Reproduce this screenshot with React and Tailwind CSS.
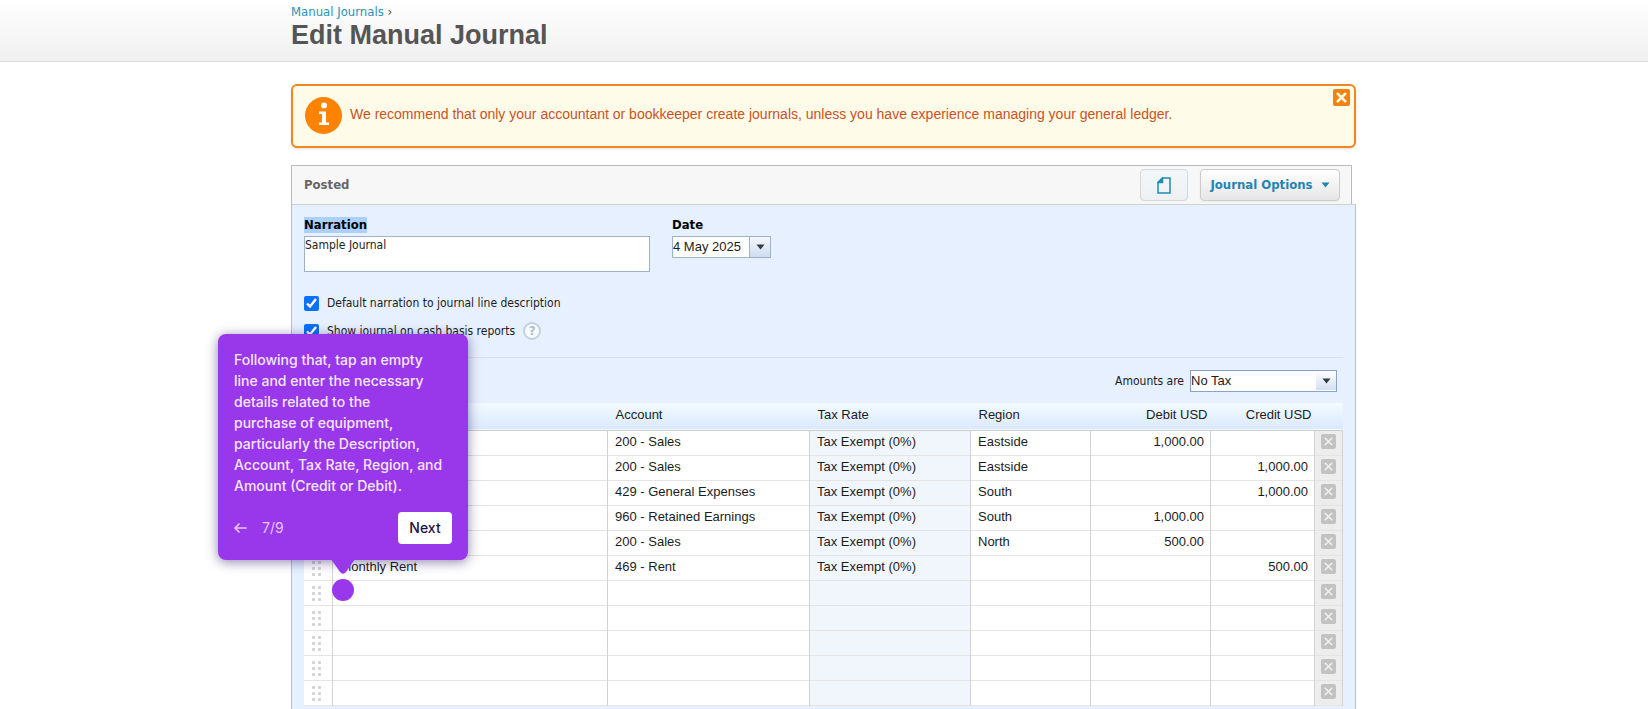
import React from 'react';
import { X } from 'lucide-react';

const lines = [
  { description: '', account: '200 - Sales', tax: 'Tax Exempt (0%)', region: 'Eastside', debit: '1,000.00', credit: '' },
  { description: '', account: '200 - Sales', tax: 'Tax Exempt (0%)', region: 'Eastside', debit: '', credit: '1,000.00' },
  { description: '', account: '429 - General Expenses', tax: 'Tax Exempt (0%)', region: 'South', debit: '', credit: '1,000.00' },
  { description: '', account: '960 - Retained Earnings', tax: 'Tax Exempt (0%)', region: 'South', debit: '1,000.00', credit: '' },
  { description: '', account: '200 - Sales', tax: 'Tax Exempt (0%)', region: 'North', debit: '500.00', credit: '' },
  { description: 'Monthly Rent', account: '469 - Rent', tax: 'Tax Exempt (0%)', region: '', debit: '', credit: '500.00' },
  {}, {}, {}, {}, {},
];

const Grip = () => (
  <svg width="12" height="19" viewBox="0 0 12 19" fill="#d2d2d2" className="mx-auto">
    {[4, 10, 16].map((y) => (
      <React.Fragment key={y}>
        <rect x="0" y={y} width="3" height="3" rx="1" />
        <rect x="6" y={y} width="3" height="3" rx="1" />
      </React.Fragment>
    ))}
  </svg>
);

const Caret = ({ color = '#333b45' }) => (
  <svg width="9" height="6" viewBox="0 0 9 6" fill={color}>
    <path d="M0.500 0.500h8L4.500 5.500z" />
  </svg>
);

const Breadcrumb = () => (
  <header className="h-[62px] border-b border-[#dcdcdc] bg-linear-to-b from-white to-[#f0f0f0]">
    <div className="mx-auto max-w-[1066px] pt-1">
      <nav className="text-[13px] leading-4 text-[#444]">
        <a href="#journals" className="text-[#2b93b8]">Manual Journals</a> ›
      </nav>
      <h1 className="font-['Liberation_Sans',sans-serif] text-[27px] leading-[30px] font-bold text-[#555]">Edit Manual Journal</h1>
    </div>
  </header>
);

const Notice = () => (
  <div className="mt-[22px] flex h-16 items-start rounded-md border-2 border-[#f5851f] bg-[#fffbe9] pt-[11px] pr-1 pl-3 shadow-sm">
    <svg width="37" height="37" viewBox="0 0 37 37" className="shrink-0">
      <circle cx="18.5" cy="18.5" r="18.5" fill="#ff8200" />
      <circle cx="19" cy="8.5" r="3" fill="#fff" />
      <path d="M14 14.500h7v11h3v2.500H14v-2.500h3v-8.500h-3z" fill="#fff" />
    </svg>
    <p className="ml-2 flex-1 pt-[7px] font-['Liberation_Sans',sans-serif] text-sm leading-5 text-[#c9531f]">
      We recommend that only your accountant or bookkeeper create journals, unless you have experience managing your general ledger.
    </p>
    <button type="button" aria-label="Dismiss" className="-mt-2 flex size-[17px] items-center justify-center rounded-xs bg-[#f5820f] text-[#fffbe9]">
      <X size={15} strokeWidth={4} />
    </button>
  </div>
);

const Toolbar = () => (
  <div className="mr-1 flex h-[39px] items-center border border-b-0 border-[#bbb] bg-[#f7f7f7] pr-[11px] pl-3 text-[13px]">
    <span className="font-bold text-[#666]">Posted</span>
    <button type="button" aria-label="Files" className="ml-auto flex h-8 w-12 items-center justify-center rounded-sm border border-[#d4d8db] bg-linear-to-b from-[#f4f7f9] to-[#eef1f4]">
      <svg width="14" height="17" viewBox="0 0 14 17" fill="none" stroke="#1e8cb5" strokeWidth="1.500">
        <path d="M5.500 1H13v15H1V5.500z" />
        <path d="M1 5.500L5.500 1v4.500z" fill="#1e8cb5" />
      </svg>
    </button>
    <button type="button" className="ml-3 flex h-8 w-[140px] items-center justify-center gap-2 rounded-sm border border-[#ccc] bg-linear-to-b from-white to-[#e6e6e6] font-bold text-[#1e86b4] shadow-xs">
      Journal Options
      <Caret color="#1e86b4" />
    </button>
  </div>
);

const JournalFields = () => (
  <div className="border-b border-[#d8e0ea] pb-[17px]">
    <div className="flex gap-[22px]">
      <div className="flex w-[346px] flex-col items-start">
        <label htmlFor="narration" className="bg-[#acd0fc] text-[13px] leading-4 font-bold text-black">Narration</label>
        <textarea id="narration" defaultValue="Sample Journal" className="mt-[3px] h-9 w-full resize-none border border-[#9fb1cb] bg-white leading-4" />
      </div>
      <div className="flex flex-col items-start">
        <label htmlFor="date" className="text-[13px] leading-4 font-bold text-black">Date</label>
        <div className="mt-[3px] flex h-[22px] border border-[#9fb1cb] bg-white">
          <input id="date" defaultValue="4 May 2025" className="w-[76px] font-['Liberation_Sans',sans-serif] text-[13px]" />
          <button type="button" aria-label="Pick a date" className="flex w-[21px] items-center justify-center border-l border-[#9fb1cb] bg-linear-to-b from-[#f4f8fd] to-[#cfdcee]">
            <Caret />
          </button>
        </div>
      </div>
    </div>
    <label className="mt-[22px] flex h-[18px] items-center gap-2">
      <input type="checkbox" defaultChecked className="size-[15px] accent-[#0a72f5]" />
      Default narration to journal line description
    </label>
    <div className="mt-2.5 flex h-[18px] items-center gap-2">
      <label className="flex items-center gap-2">
        <input type="checkbox" defaultChecked className="size-[15px] accent-[#0a72f5]" />
        Show journal on cash basis reports
      </label>
      <button type="button" aria-label="Help" className="flex size-[18px] items-center justify-center rounded-full border-2 border-[#c3cfdf] bg-[#f7fafe] text-[13px] font-bold text-[#a9bcd3]">?</button>
    </div>
  </div>
);

const JournalLines = () => (
  <table className="w-full table-fixed border-collapse font-['Liberation_Sans',sans-serif] text-[13px] leading-5">
    <colgroup>
      <col className="w-7" />
      <col />
      <col className="w-[202px]" />
      <col className="w-[161px]" />
      <col className="w-[120px]" />
      <col className="w-[120px]" />
      <col className="w-[104px]" />
      <col className="w-7" />
    </colgroup>
    <thead>
      <tr className="h-[27px] border-b border-[#ccc] bg-linear-to-b from-[#f2faff] to-[#dae9fc] text-left [&>th]:p-0 [&>th]:pb-0.5 [&>th]:font-normal">
        <th aria-label="Reorder" />
        <th aria-label="Description" />
        <th><span className="pl-2">Account</span></th>
        <th><span className="pl-2">Tax Rate</span></th>
        <th><span className="pl-2">Region</span></th>
        <th className="text-right"><span className="pr-[3px]">Debit USD</span></th>
        <th className="text-right"><span className="pr-[3px]">Credit USD</span></th>
        <th aria-label="Remove" />
      </tr>
    </thead>
    <tbody>
      {lines.map((line, i) => (
        <tr key={i} className="h-[25px] border-b border-[#e4e4e4] bg-white [&>td]:border-r [&>td]:border-r-[#d2d2d2] [&>td]:pt-0 [&>td]:pb-0.5">
          <td className="px-0"><Grip /></td>
          <td className="px-2">{line.description}</td>
          <td className="px-[7px]">{line.account}</td>
          <td className="bg-[#f1f6fd] px-[7px]">{line.tax}</td>
          <td className="px-[7px]">{line.region}</td>
          <td className="px-1.5 text-right">{line.debit}</td>
          <td className="px-1.5 text-right">{line.credit}</td>
          <td className="bg-[#ededed] px-0">
            <button type="button" aria-label="Remove line" className="mx-auto flex size-[15px] items-center justify-center rounded-xs bg-[#c2c2c2] text-[#f0f0f0]">
              <X size={13} strokeWidth={3} />
            </button>
          </td>
        </tr>
      ))}
    </tbody>
  </table>
);

const TourStep = () => (
  <div role="dialog" aria-label="Tour step" className="absolute top-[169px] -left-[73px] w-[250px] rounded-lg bg-[#9938ea] px-4 pt-[15px] pb-4 font-['Inter',sans-serif] text-sm font-medium text-[#f5e6ff] shadow-[0_2px_12px_rgba(30,10,90,0.5)]">
    <p className="leading-[21px]">
      Following that, tap an empty<br />
      line and enter the necessary<br />
      details related to the<br />
      purchase of equipment,<br />
      particularly the Description,<br />
      Account, Tax Rate, Region, and<br />
      Amount (Credit or Debit).
    </p>
    <div className="mt-4 flex items-center">
      <button type="button" aria-label="Back">
        <svg width="13" height="10" viewBox="0 0 13 10" fill="none" stroke="#e7c6ff" strokeWidth="1.700" strokeLinecap="round" strokeLinejoin="round">
          <path d="M12 5H1M5 1L1 5l4 4" />
        </svg>
      </button>
      <span className="ml-[15px] font-normal text-[#e7c6ff]">7/9</span>
      <button type="button" className="ml-auto h-8 w-[54px] rounded-sm bg-white text-[#1d1145]">Next</button>
    </div>
    <svg width="24" height="15" viewBox="0 0 24 15" fill="#9938ea" className="absolute top-full left-[113px] -mt-px">
      <path d="M0 0h24L15 13q-3 3.500-6 0z" />
    </svg>
    <span className="absolute top-full left-[114px] mt-[19px] size-[22px] rounded-full bg-[#9938ea]" />
  </div>
);

const App = () => {
  return (
    <div className="bg-white font-['DejaVu_Sans_Condensed','DejaVu_Sans',sans-serif] text-xs text-[#1c1c1c]">
      <Breadcrumb />
      <main className="mx-auto max-w-[1066px] pr-px">
        <Notice />
        <section className="relative mt-[17px]">
          <Toolbar />
          <div className="border-x border-t border-x-[#b4bfd0] border-t-[#d0d0d0] bg-[#e6f0ff] px-3 pt-3 pb-1">
            <JournalFields />
            <div className="my-3 flex h-[21px] items-center justify-end gap-1.5 pr-1.5">
              <label htmlFor="amounts">Amounts are</label>
              <div className="relative flex items-center">
                <select id="amounts" className="h-[22px] w-[147px] appearance-none border border-[#85a5c9] bg-white font-['Liberation_Sans',sans-serif] text-[13px]">
                  <option>No Tax</option>
                </select>
                <span className="pointer-events-none absolute right-px flex h-[19px] w-5 items-center justify-center bg-linear-to-b from-white to-[#d3dfef]">
                  <Caret />
                </span>
              </div>
            </div>
            <JournalLines />
          </div>
          <TourStep />
        </section>
      </main>
    </div>
  );
};

export default App;
